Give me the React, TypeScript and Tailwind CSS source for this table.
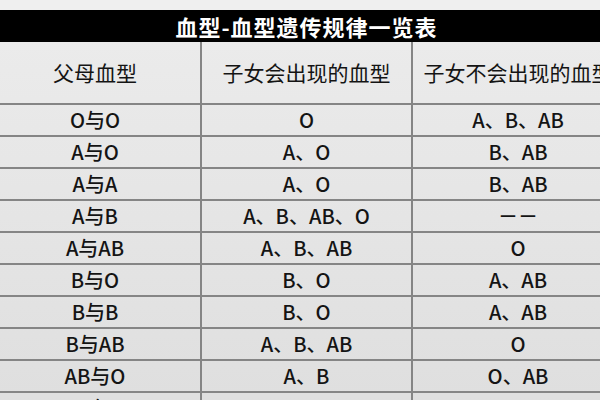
const rows: [string, string, string][] = [
  ["O与O", "O", "A、B、AB"],
  ["A与O", "A、O", "B、AB"],
  ["A与A", "A、O", "B、AB"],
  ["A与B", "A、B、AB、O", "－－"],
  ["A与AB", "A、B、AB", "O"],
  ["B与O", "B、O", "A、AB"],
  ["B与B", "B、O", "A、AB"],
  ["B与AB", "A、B、AB", "O"],
  ["AB与O", "A、B", "O、AB"],
  ["AB与A", "A、B、AB", "O"],
];

const headers = ["父母血型", "子女会出现的血型", "子女不会出现的血型"];

export default function App() {
  return (
    <div
      className="w-[600px] h-[400px] overflow-hidden bg-[#efefef] text-[#141414]"
      style={{ fontFamily: '"Noto Sans CJK SC", "Noto Sans", sans-serif' }}
    >
      <div className="ml-[-10px] w-[633px] pt-[10px]">
        <div className="h-[32px] bg-black flex items-center justify-center text-white text-[22px] font-bold tracking-[1px] leading-none">
          血型-血型遗传规律一览表
        </div>
        <div className="grid grid-cols-[212px_211px_210px] bg-gradient-to-b from-[#ebebeb] to-[#dedede]">
          {headers.map((h, i) => (
            <div
              key={h}
              className={`h-[63px] flex items-center justify-center whitespace-nowrap text-[21px] border-b-2 border-[#858585] ${i < 2 ? "border-r-2" : ""}`}
            >
              {h}
            </div>
          ))}
          {rows.map((r) =>
            r.map((c, i) => (
              <div
                key={r[0] + i}
                className={`h-[32px] flex items-center justify-center whitespace-nowrap text-[20px] font-medium leading-none border-b-2 border-[#858585] ${i < 2 ? "border-r-2" : ""}`}
              >
                {c}
              </div>
            ))
          )}
        </div>
      </div>
    </div>
  );
}
